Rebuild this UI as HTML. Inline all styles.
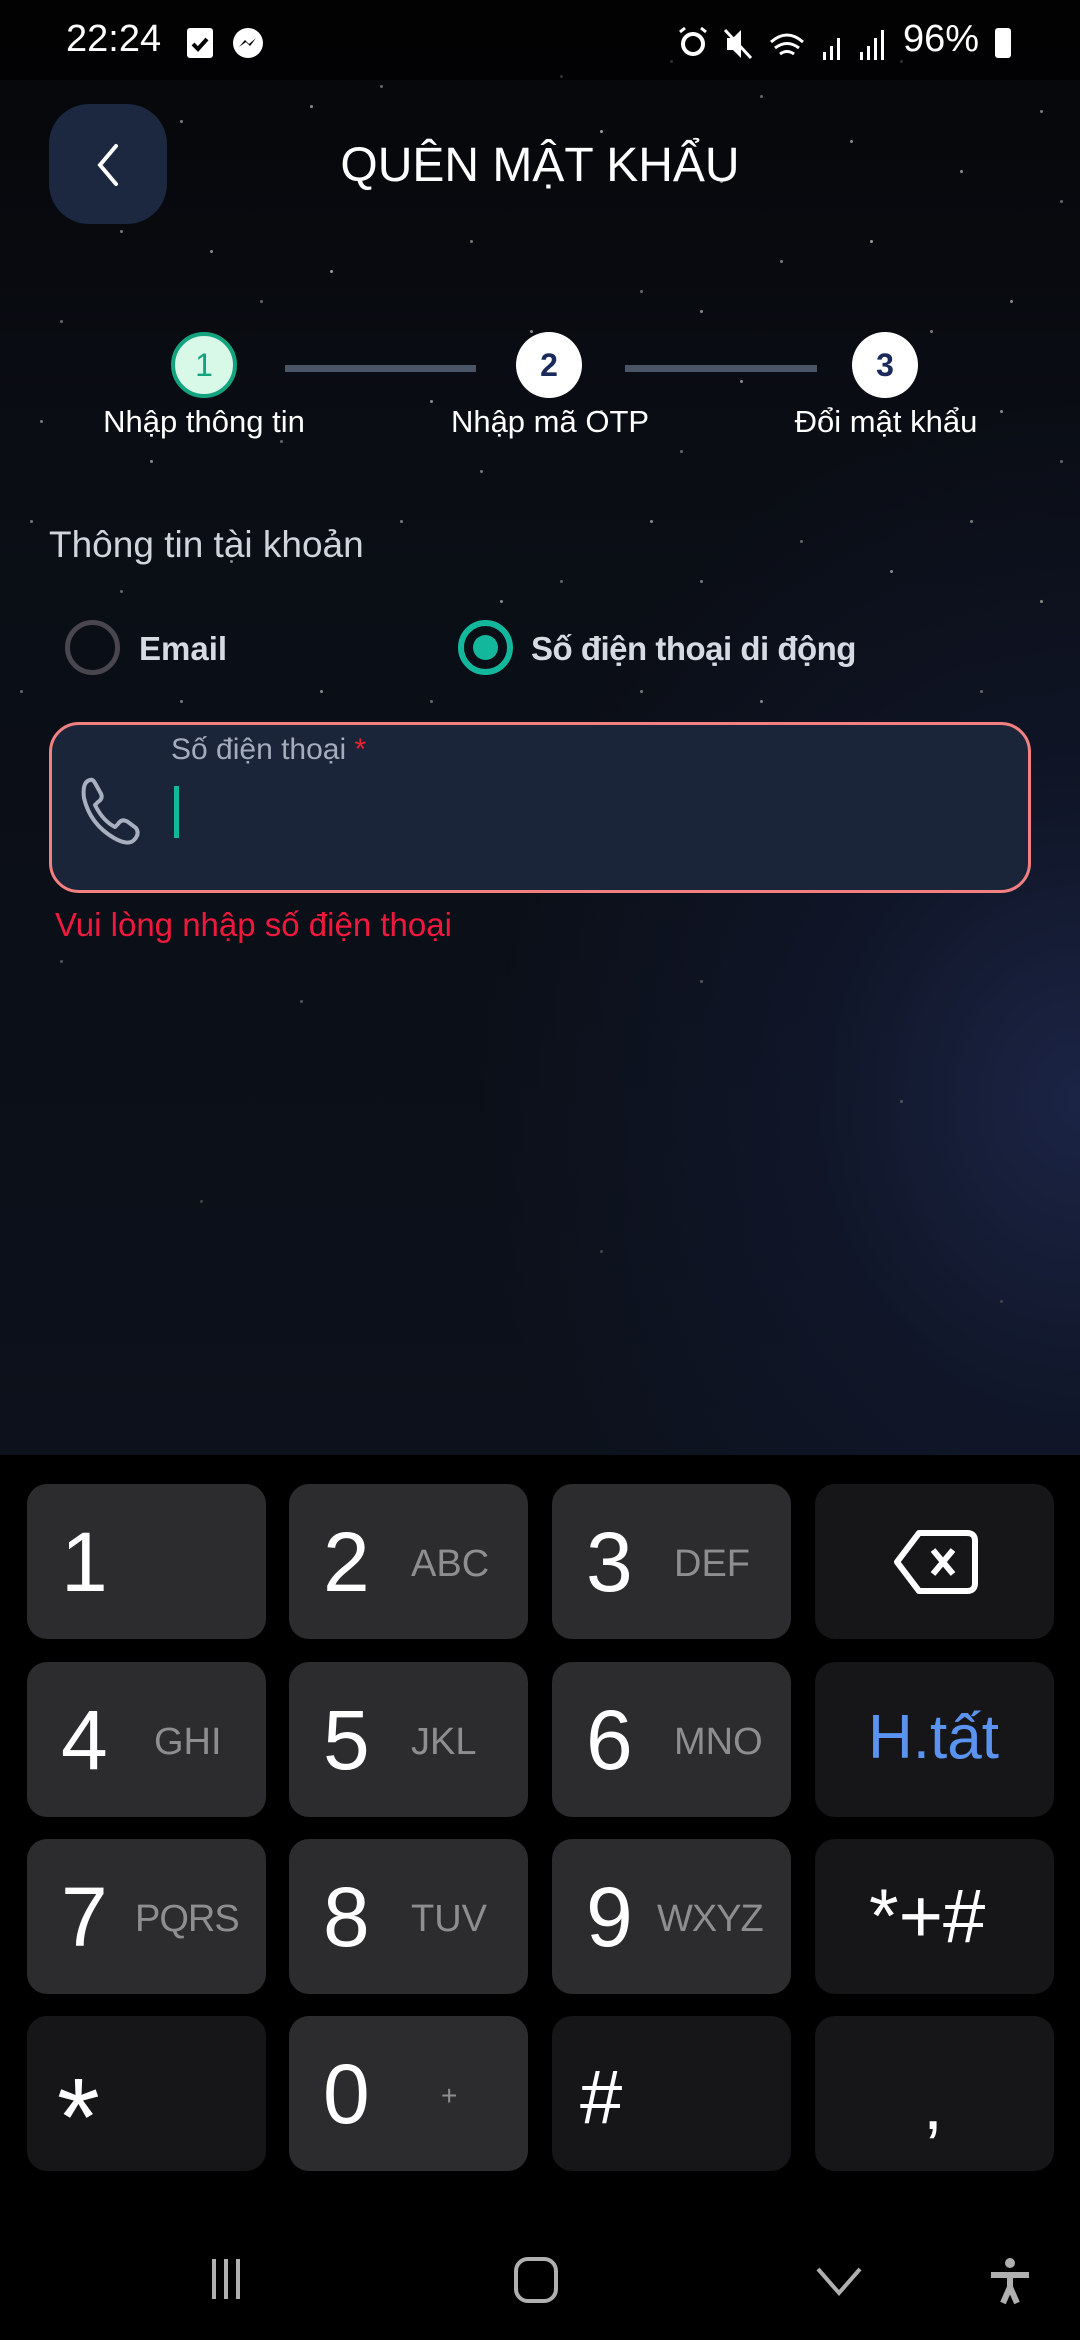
<!DOCTYPE html>
<html><head><meta charset="utf-8"><style>
*{margin:0;padding:0;box-sizing:border-box}
body{width:1080px;height:2340px;overflow:hidden;background:#000;font-family:"Liberation Sans",sans-serif;position:relative}
.bg{position:absolute;left:0;top:0;width:1080px;height:1455px;background:radial-gradient(ellipse 600px 700px at 1080px 1100px,#1b2445 0%,rgba(20,28,55,0.5) 45%,rgba(10,13,20,0) 100%),linear-gradient(#050608 0%,#0a0d14 30%,#0c111b 100%)}
.stars{position:absolute;left:0;top:0;width:3px;height:3px;border-radius:50%;background:transparent;box-shadow:
180px 120px #777,310px 105px #888,380px 85px #666,420px 160px #888,560px 75px #777,600px 130px #999,670px 60px #777,720px 180px #888,760px 95px #666,850px 140px #888,900px 60px #777,960px 170px #888,1040px 110px #777,1060px 200px #666,
120px 230px #777,210px 250px #888,260px 300px #666,330px 270px #999,470px 240px #777,530px 330px #888,640px 290px #666,700px 310px #888,780px 260px #777,870px 240px #999,930px 330px #777,1010px 300px #888,
60px 320px #666,40px 420px #777,150px 460px #888,280px 440px #666,430px 400px #888,480px 470px #777,600px 410px #888,680px 450px #666,740px 380px #888,820px 420px #777,1000px 410px #888,1060px 460px #666,
30px 520px #777,120px 590px #666,230px 560px #888,400px 520px #777,500px 600px #888,560px 580px #666,650px 520px #888,700px 580px #777,800px 540px #666,890px 570px #888,970px 520px #777,1040px 600px #888,
20px 690px #666,180px 700px #777,320px 690px #888,430px 700px #666,640px 690px #777,760px 700px #888,980px 690px #666,60px 960px #555,300px 1000px #555,700px 980px #555,900px 1100px #555,200px 1200px #444,600px 1250px #444,1000px 1300px #444}
.status{position:absolute;top:0;left:0;width:1080px;height:80px;background:rgba(0,0,0,0.6)}
.t{position:absolute;color:#fff;white-space:nowrap}
.back{position:absolute;left:49px;top:104px;width:118px;height:120px;background:#1b2840;border-radius:40px}
.circle{position:absolute;width:66px;height:66px;border-radius:50%;background:#fff;color:#1a2a5a;font-size:32px;font-weight:bold;text-align:center;line-height:66px}
.line{position:absolute;height:7px;background:#4a5568;top:365px}
.lbl{position:absolute;top:404px;color:#fff;font-size:31px;text-align:center;width:300px}
.key{position:absolute;width:239px;height:155px;border-radius:20px;background:#2c2c2e}
.key.d{background:#161618}
.key .n{position:absolute;left:34px;top:30px;font-size:84px;color:#fff;line-height:96px}
.key .l{position:absolute;left:122px;top:58px;font-size:38px;color:#8e8e90;line-height:44px}
</style></head><body>
<div class="bg"></div>
<div class="stars"></div>
<div class="status"></div>
<div class="t" style="left:66px;top:18px;font-size:38px">22:24</div>
<div style="position:absolute;left:187px;top:28px;width:26px;height:30px;background:#fff;border-radius:3px"></div>
<svg style="position:absolute;left:189px;top:34px" width="22" height="20"><path d="M4 10 L9 15 L18 5" stroke="#000" stroke-width="4" fill="none"/></svg>
<svg style="position:absolute;left:230px;top:26px" width="36" height="36"><circle cx="18" cy="17" r="15" fill="#fff"/><path d="M9 21 L15 14 L19 18 L26 12 L20 20 L16 16 Z" fill="#000"/></svg>
<svg style="position:absolute;left:675px;top:24px" width="340" height="40" fill="#fff" stroke="#fff">
<circle cx="18" cy="20" r="10" fill="none" stroke-width="4"/><path d="M5 8 L10 4 M31 8 L26 4" stroke-width="3"/>
<path d="M52 14 h6 l8 -8 v28 l-8 -8 h-6z" stroke="none"/><path d="M50 6 L76 34" stroke-width="3"/>
<path d="M96 18 q16 -14 32 0 M100 24 q12 -9 24 0 M105 30 q7 -5 14 0" fill="none" stroke-width="3"/>
<rect x="148" y="28" width="3" height="8" stroke="none"/><rect x="155" y="22" width="3" height="14" stroke="none"/><rect x="162" y="14" width="3" height="22" stroke="none"/>
<rect x="185" y="28" width="3" height="8" stroke="none"/><rect x="192" y="22" width="3" height="14" stroke="none"/><rect x="199" y="14" width="3" height="22" stroke="none"/><rect x="206" y="6" width="3" height="30" stroke="none"/>
</svg>
<div class="t" style="left:903px;top:18px;font-size:38px">96%</div>
<div style="position:absolute;left:995px;top:28px;width:16px;height:30px;background:#fff;border-radius:3px"></div>
<div class="back"></div>
<svg style="position:absolute;left:90px;top:142px" width="36" height="46"><path d="M26 4 L10 23 L26 42" stroke="#fff" stroke-width="4" fill="none" stroke-linecap="round"/></svg>
<div class="t" style="left:0;width:1080px;text-align:center;top:138px;font-size:48px">QUÊN MẬT KHẨU</div>
<div class="line" style="left:285px;width:191px"></div>
<div class="line" style="left:625px;width:192px"></div>
<div class="circle" style="left:171px;top:332px;background:#d8f8e8;border:4px solid #14a37f;color:#14a37f;font-weight:normal;line-height:58px">1</div>
<div class="circle" style="left:516px;top:332px">2</div>
<div class="circle" style="left:852px;top:332px">3</div>
<div class="lbl" style="left:54px">Nhập thông tin</div>
<div class="lbl" style="left:400px">Nhập mã OTP</div>
<div class="lbl" style="left:736px">Đổi mật khẩu</div>
<div class="t" style="left:49px;top:524px;font-size:37px;color:#d0d4dc">Thông tin tài khoản</div>
<div style="position:absolute;left:65px;top:620px;width:55px;height:55px;border-radius:50%;border:5px solid #4a4650"></div>
<div class="t" style="left:139px;top:630px;font-size:33px;color:#d6dae2;font-weight:bold">Email</div>
<div style="position:absolute;left:458px;top:620px;width:55px;height:55px;border-radius:50%;border:6px solid #13b89c"></div>
<div style="position:absolute;left:473px;top:635px;width:25px;height:25px;border-radius:50%;background:#13b89c"></div>
<div class="t" style="left:531px;top:630px;font-size:33px;color:#d6dae2;font-weight:bold;letter-spacing:-0.5px">Số điện thoại di động</div>
<div style="position:absolute;left:49px;top:722px;width:982px;height:171px;border-radius:30px;border:3px solid #f28080;background:#1b253a"></div>
<div class="t" style="left:171px;top:733px;font-size:30px;color:#a3acbd">Số điện thoại <span style="color:#f02030">*</span></div>
<svg style="position:absolute;left:78px;top:774px" width="76" height="76"><path d="M12 6 q-8 2 -6 18 q6 26 30 40 q14 8 20 2 q6 -6 2 -12 l-8 -6 q-6 -4 -10 2 l-3 3 q-12 -6 -20 -22 l3 -3 q6 -4 2 -10 l-5 -9 q-2 -4 -5 -3z" stroke="#a8b0c0" stroke-width="4" fill="none" stroke-linejoin="round"/></svg>
<div style="position:absolute;left:174px;top:786px;width:5px;height:52px;background:#13b89c"></div>
<div class="t" style="left:55px;top:906px;font-size:33px;color:#f0183c">Vui lòng nhập số điện thoại</div>

<div class="key" style="left:27px;top:1484px"><div class="n">1</div></div>
<div class="key" style="left:289px;top:1484px"><div class="n">2</div><div class="l">ABC</div></div>
<div class="key" style="left:552px;top:1484px"><div class="n">3</div><div class="l">DEF</div></div>
<div class="key d" style="left:815px;top:1484px"><svg style="position:absolute;left:76px;top:45px" width="90" height="66"><path d="M28 4 H76 q8 0 8 8 V54 q0 8 -8 8 H28 L6 33 Z" stroke="#fff" stroke-width="6" fill="none" stroke-linejoin="round"/><path d="M42 21 L62 45 M62 21 L42 45" stroke="#fff" stroke-width="6"/></svg></div>
<div class="key" style="left:27px;top:1662px"><div class="n">4</div><div class="l" style="left:127px">GHI</div></div>
<div class="key" style="left:289px;top:1662px"><div class="n">5</div><div class="l">JKL</div></div>
<div class="key" style="left:552px;top:1662px"><div class="n">6</div><div class="l">MNO</div></div>
<div class="key d" style="left:815px;top:1662px"><div class="t" style="left:53px;top:40px;font-size:62px;color:#5b93f0">H.tất</div></div>
<div class="key" style="left:27px;top:1839px"><div class="n">7</div><div class="l" style="left:108px;letter-spacing:-1px">PQRS</div></div>
<div class="key" style="left:289px;top:1839px"><div class="n">8</div><div class="l">TUV</div></div>
<div class="key" style="left:552px;top:1839px"><div class="n">9</div><div class="l" style="left:105px;letter-spacing:-1px">WXYZ</div></div>
<div class="key d" style="left:815px;top:1839px"><div class="t" style="left:54px;top:34px;font-size:76px">*+#</div></div>
<div class="key d" style="left:27px;top:2016px"><div class="t" style="left:30px;top:38px;font-size:110px">*</div></div>
<div class="key" style="left:289px;top:2016px"><div class="n">0</div><div class="l" style="left:152px;top:58px;font-size:28px">+</div></div>
<div class="key d" style="left:552px;top:2016px"><div class="t" style="left:28px;top:38px;font-size:76px">#</div></div>
<div class="key d" style="left:815px;top:2016px"><div class="t" style="left:108px;top:48px;font-size:72px">,</div></div>

<svg style="position:absolute;left:200px;top:2255px" width="880" height="50" stroke="#b0b0b0" stroke-width="4" fill="none">
<path d="M14 4 V44 M26 4 V44 M38 4 V44"/>
<rect x="316" y="4" width="40" height="42" rx="12"/>
<path d="M618 14 L639 38 L660 14"/>
<circle cx="810" cy="8" r="5" fill="#b0b0b0" stroke="none"/><path d="M791 20 H829 M810 18 V32 L803 48 M810 32 L817 48" stroke-width="6"/>
</svg>
</body></html>
